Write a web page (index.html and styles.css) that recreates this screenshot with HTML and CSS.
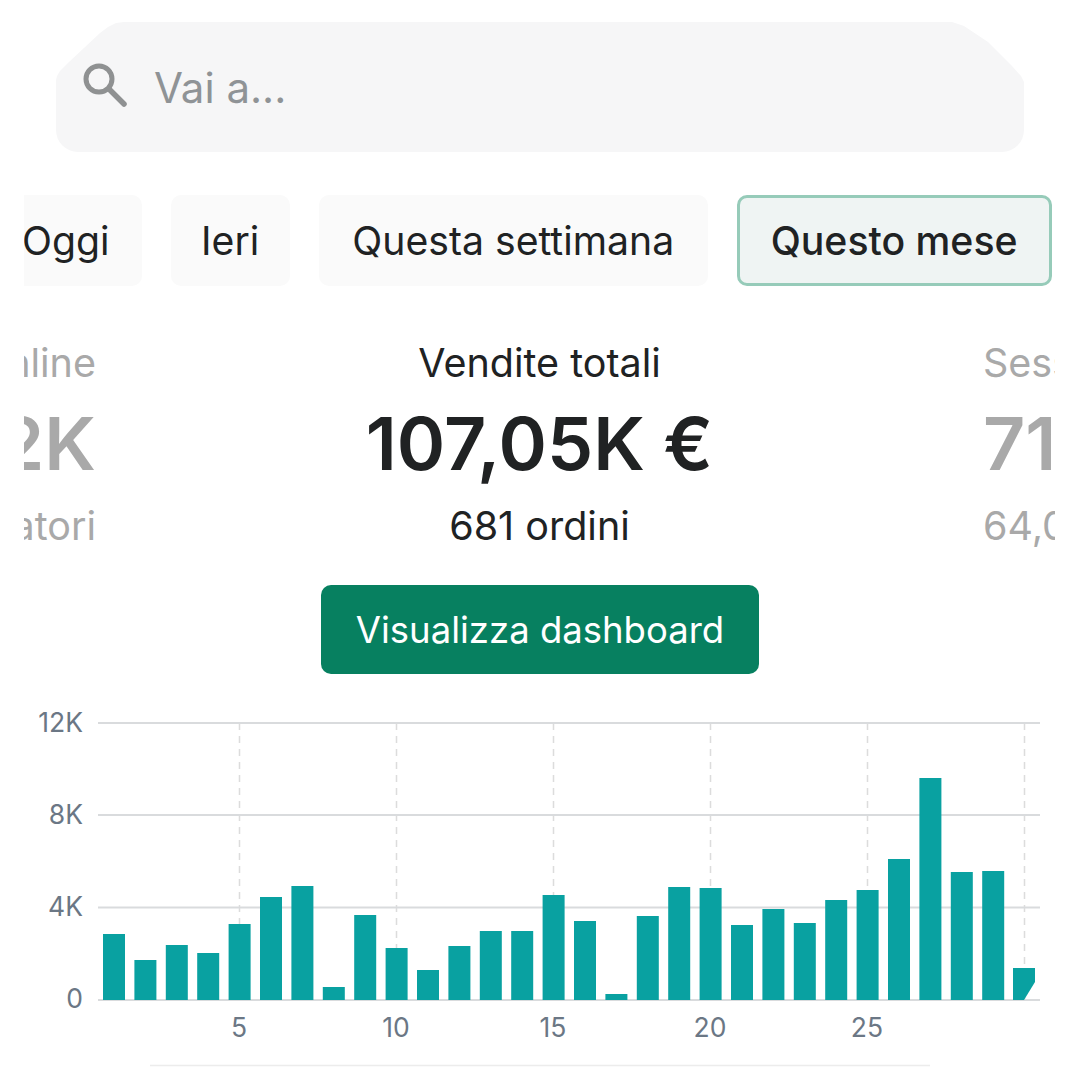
FILE: index.html
```html
<!DOCTYPE html>
<html lang="it">
<head>
  <meta charset="UTF-8">
  <title>Dashboard</title>
  <link rel="stylesheet" href="styles.css">
</head>
<body>

  <!-- Search -->
  <div class="search-bar">
    <svg class="search-icon" width="46" height="46" viewBox="0 0 46 46">
      <circle cx="16" cy="16" r="13" fill="none" stroke="#8f9192" stroke-width="5"/>
      <path d="M26 26 L41 41" fill="none" stroke="#8f9192" stroke-width="5.5" stroke-linecap="round"/>
    </svg>
    <span class="search-text">Vai a...</span>
  </div>

  <!-- Period tabs -->
  <div class="period-tabs">
    <div class="period-tab period-first">Oggi</div>
    <div class="period-tab period-short">Ieri</div>
    <div class="period-tab period-wide">Questa settimana</div>
    <div class="period-tab active">Questo mese</div>
  </div>

  <!-- Stats carousel -->
  <div class="stats">
    <div class="stat stat-left">
      <div class="stat-label">Negozio online</div>
      <div class="stat-value">45,2K</div>
      <div class="stat-sub">visitatori</div>
    </div>
    <div class="stat stat-main">
      <div class="stat-label">Vendite totali</div>
      <div class="stat-value">107,05K €</div>
      <div class="stat-sub">681 ordini</div>
    </div>
    <div class="stat stat-right">
      <div class="stat-label">Sessioni</div>
      <div class="stat-value">71,4K</div>
      <div class="stat-sub">64,0%</div>
    </div>
  </div>

  <div class="action">
    <button class="dashboard-btn">Visualizza dashboard</button>
  </div>

  <!-- Chart -->
  <svg class="chart" width="1080" height="376" viewBox="0 700 1080 376">
    <g class="grid-v">
      <line x1="239.500" y1="723" x2="239.500" y2="1000"/>
      <line x1="396.500" y1="723" x2="396.500" y2="1000"/>
      <line x1="553.500" y1="723" x2="553.500" y2="1000"/>
      <line x1="710.500" y1="723" x2="710.500" y2="1000"/>
      <line x1="867.500" y1="723" x2="867.500" y2="1000"/>
      <line x1="1024.500" y1="723" x2="1024.500" y2="1000"/>
    </g>
    <g class="grid-h">
      <line x1="98" y1="723" x2="1040" y2="723"/>
      <line x1="98" y1="815" x2="1040" y2="815"/>
      <line x1="98" y1="907.500" x2="1040" y2="907.500"/>
      <line x1="98" y1="1000" x2="1040" y2="1000"/>
    </g>
    <g class="bars">
      <rect x="103" y="934" width="22" height="66"/>
      <rect x="134.400" y="960" width="22" height="40"/>
      <rect x="165.800" y="945" width="22" height="55"/>
      <rect x="197.200" y="953" width="22" height="47"/>
      <rect x="228.600" y="924" width="22" height="76"/>
      <rect x="260" y="897" width="22" height="103"/>
      <rect x="291.400" y="886" width="22" height="114"/>
      <rect x="322.800" y="987" width="22" height="13"/>
      <rect x="354.200" y="915" width="22" height="85"/>
      <rect x="385.600" y="948" width="22" height="52"/>
      <rect x="417" y="970" width="22" height="30"/>
      <rect x="448.400" y="946" width="22" height="54"/>
      <rect x="479.800" y="931" width="22" height="69"/>
      <rect x="511.200" y="931" width="22" height="69"/>
      <rect x="542.600" y="895" width="22" height="105"/>
      <rect x="574" y="921" width="22" height="79"/>
      <rect x="605.400" y="994" width="22" height="6"/>
      <rect x="636.800" y="916" width="22" height="84"/>
      <rect x="668.200" y="887" width="22" height="113"/>
      <rect x="699.600" y="888" width="22" height="112"/>
      <rect x="731" y="925" width="22" height="75"/>
      <rect x="762.400" y="909" width="22" height="91"/>
      <rect x="793.800" y="923" width="22" height="77"/>
      <rect x="825.200" y="900" width="22" height="100"/>
      <rect x="856.600" y="890" width="22" height="110"/>
      <rect x="888" y="859" width="22" height="141"/>
      <rect x="919.400" y="778" width="22" height="222"/>
      <rect x="950.800" y="872" width="22" height="128"/>
      <rect x="982.200" y="871" width="22" height="129"/>
      <polygon points="1013,968 1035,968 1035,982 1024,1000 1013,1000"/>
    </g>
    <g class="labels-y">
      <text x="83" y="732">12K</text>
      <text x="83" y="824">8K</text>
      <text x="83" y="916">4K</text>
      <text x="83" y="1008">0</text>
    </g>
    <g class="labels-x">
      <text x="239" y="1037">5</text>
      <text x="396" y="1037">10</text>
      <text x="553" y="1037">15</text>
      <text x="710" y="1037">20</text>
      <text x="867" y="1037">25</text>
    </g>
    <line class="chart-rule" x1="150" y1="1065.500" x2="930" y2="1065.500"/>
  </svg>

</body>
</html>
```
FILE: styles.css
```css
* { box-sizing: border-box; }

html, body {
  height: 1080px;
  overflow: hidden;
}

body {
  margin: 0;
  background: #fff;
  font-family: Inter, "Liberation Sans", sans-serif;
  color: #202223;
}

/* Search */
.search-bar {
  display: flex;
  align-items: center;
  gap: 25px;
  height: 130px;
  margin: 22px 56px 0 56px;
  padding: 0 0 0 27px;
  background: #f6f6f7;
  border-radius: 0 0 22px 22px;
  clip-path: polygon(
    0 100%, 0 58px, 1px 54px, 4px 49px, 13px 40px, 44px 11px, 52px 5px, 60px 1px, 68px 0,
    calc(100% - 72px) 0, calc(100% - 60px) 4px, calc(100% - 36px) 20px,
    calc(100% - 12px) 44px, calc(100% - 3px) 54px, 100% 60px, 100% 100%
  );
}

.search-icon {
  flex-shrink: 0;
  margin-top: -2px;
}

.search-text {
  font-size: 42px;
  color: #8f9396;
}

/* Period tabs */
.period-tabs {
  display: flex;
  gap: 29px;
  height: 91px;
  margin: 43px 24px 0 24px;
  overflow: hidden;
}

.period-tab {
  flex-shrink: 0;
  display: flex;
  align-items: center;
  padding: 0 32px;
  background: #fafafa;
  border-radius: 10px;
  font-size: 39.200px;
  white-space: nowrap;
}

.period-first {
  margin-left: -34px;
}

.period-short {
  padding: 0 30.500px;
}

.period-wide {
  padding: 0 33.500px;
}

.period-tab.active {
  background: #eff4f3;
  border: 3px solid #96cbb9;
  padding: 0 31px;
  font-weight: 500;
}

/* Stats */
.stats {
  display: grid;
  grid-template-columns: 72px 1fr 72px;
  margin: 55px 25px 0 24px;
}

.stat {
  display: flex;
  flex-direction: column;
  overflow: hidden;
  white-space: nowrap;
}

.stat-left {
  align-items: flex-end;
  color: #a9a9a9;
}

.stat-main {
  align-items: center;
}

.stat-right {
  align-items: flex-start;
  color: #a9a9a9;
}

.stat-label, .stat-sub {
  font-size: 39.500px;
  line-height: 44px;
}

.stat-value {
  font-size: 73.500px;
  font-weight: 600;
  line-height: 88px;
  margin: 15px 0 16px 0;
}

/* Button */
.action {
  display: flex;
  justify-content: center;
  margin-top: 37px;
}

.dashboard-btn {
  width: 438px;
  height: 89px;
  border: none;
  border-radius: 10px;
  background: #078060;
  color: #fff;
  font-family: inherit;
  font-size: 36.500px;
}

/* Chart */
.chart {
  display: block;
  margin-top: 26px;
}

.grid-v line {
  stroke: #dcdcdc;
  stroke-width: 1.500;
  stroke-dasharray: 7 6;
}

.grid-h line {
  stroke: #d9dbdd;
  stroke-width: 2;
}

.bars {
  fill: #09a1a1;
}

.labels-y text, .labels-x text {
  font-size: 26.500px;
  fill: #6b7785;
}

.labels-y text {
  text-anchor: end;
}

.labels-x text {
  text-anchor: middle;
}

.chart-rule {
  stroke: #ececec;
  stroke-width: 1.500;
}
```
